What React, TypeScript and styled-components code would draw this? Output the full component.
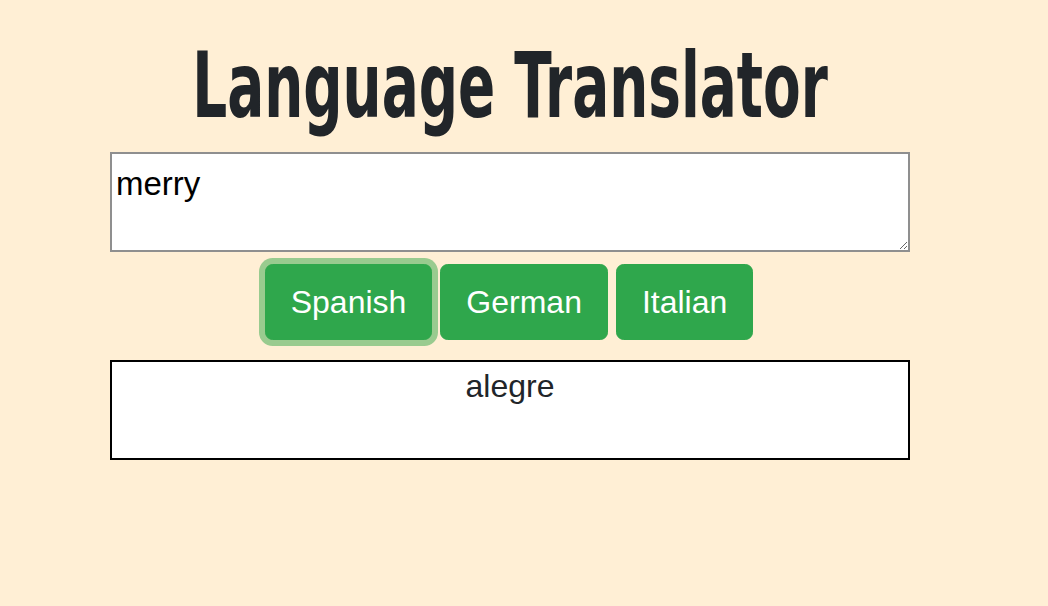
import React, { useState } from "react";
import styled, { createGlobalStyle } from "styled-components";

const Global = createGlobalStyle`
  html, body { margin: 0; padding: 0; background: #ffefd5; }
  body { font-family: "Liberation Sans", Arial, sans-serif; color: #212529; }
`;

const Page = styled.main`
  width: 1020px;
  display: flex;
  flex-direction: column;
  align-items: center;
`;

const Title = styled.h1`
  margin: 45px 0 0;
  height: 80px;
  font-family: "DejaVu Sans Condensed", "DejaVu Sans", sans-serif;
  font-stretch: condensed;
  font-weight: 700;
  font-size: 61px;
  line-height: 80px;
  color: #212529;
  white-space: nowrap;
  transform: scaleY(1.5);
  transform-origin: 50% 50%;
`;

const Input = styled.textarea`
  box-sizing: border-box;
  width: 800px;
  height: 100px;
  margin-top: 27px;
  border: 2px solid #8f8f8f;
  background: #fff;
  padding: 11px 4px 4px;
  font-family: "Liberation Sans", Arial, sans-serif;
  font-size: 33px;
  line-height: 1.15;
  color: #000;
  outline: none;
`;

const Buttons = styled.div`
  display: flex;
  gap: 8px;
  margin-top: 12px;
  margin-right: 2px;
`;

const Button = styled.button<{ $focused?: boolean }>`
  box-sizing: border-box;
  height: 76px;
  padding: 0 25px;
  border: 1.6px solid #2fa74c;
  border-radius: 7.7px;
  background: #2fa74c;
  color: #fff;
  font-family: "Liberation Sans", Arial, sans-serif;
  font-size: 32px;
  line-height: 1.5;
  cursor: pointer;
  box-shadow: ${(p) => (p.$focused ? "0 0 0 6px #99cb8f" : "none")};
`;

const Output = styled.div`
  box-sizing: border-box;
  width: 800px;
  height: 100px;
  margin-top: 20px;
  border: 2px solid #000;
  background: #fff;
  text-align: center;
  font-size: 32px;
  line-height: 1.5;
  color: #212529;
`;

const languages = ["Spanish", "German", "Italian"];

export default function App() {
  const [text, setText] = useState("merry");
  const [active] = useState("Spanish");
  return (
    <>
      <Global />
      <Page>
        <Title>Language Translator</Title>
        <Input value={text} onChange={(e) => setText(e.target.value)} />
        <Buttons>
          {languages.map((l) => (
            <Button key={l} $focused={l === active}>
              {l}
            </Button>
          ))}
        </Buttons>
        <Output>alegre</Output>
      </Page>
    </>
  );
}
